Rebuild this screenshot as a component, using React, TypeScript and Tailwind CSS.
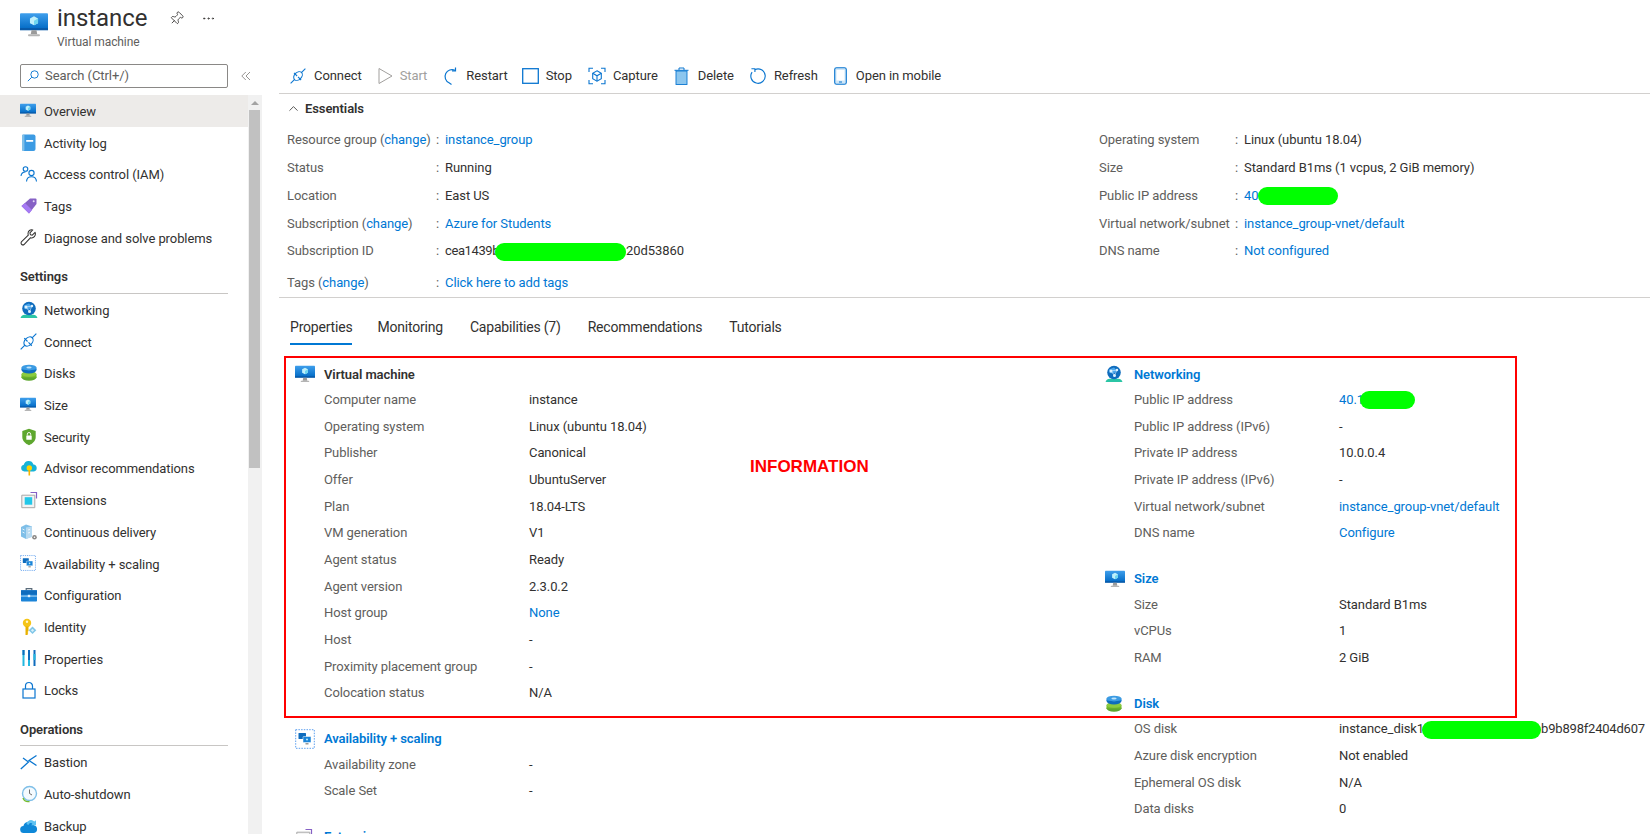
import { ChevronUp, Ellipsis, Pin } from "lucide-react";
import type { ReactNode } from "react";

function VmIcon({ className = "h-[16px] w-[18px]" }: { className?: string }) {
  return (
    <svg viewBox="0 0 18 16" className={className}>
      <defs>
        <linearGradient id="vmBlue" x1="0" y1="0" x2="0" y2="1">
          <stop offset="0" stopColor="#3f9fec" />
          <stop offset="1" stopColor="#0069c4" />
        </linearGradient>
      </defs>
      <rect x="0" y="0.5" width="18" height="10.5" rx="0.6" fill="url(#vmBlue)" />
      <rect x="0" y="10" width="18" height="1.4" fill="#0a5aa8" />
      <path d="M7.4 11.4h3.2l.5 2.6H6.9z" fill="#9a9a9a" />
      <rect x="5.2" y="14" width="7.6" height="1.2" rx="0.5" fill="#b5b5b5" />
      <path d="M9 2.4l2.6 1.4v3L9 8.2 6.4 6.8v-3z" fill="#bff0fb" />
      <path d="M9 5.2l2.6-1.4v3L9 8.2z" fill="#6fd6ef" />
    </svg>
  );
}

function LogIcon() {
  return (
    <svg viewBox="0 0 18 18" className="h-[18px] w-[18px]">
      <rect x="2" y="0.5" width="13.5" height="16.5" rx="2" fill="#3c9be3" />
      <rect x="2" y="0.5" width="2.4" height="16.5" rx="1" fill="#7fbfe8" />
      <rect x="6.2" y="6" width="7" height="1.8" fill="#fff" />
    </svg>
  );
}

function IamIcon() {
  return (
    <svg viewBox="0 0 18 18" className="h-[18px] w-[18px]" fill="none" stroke="#0b76d0" strokeWidth="1.1">
      <circle cx="5.5" cy="4" r="2.3" />
      <path d="M1 11c.3-2.6 2-4 4.5-4" />
      <circle cx="11.5" cy="8" r="2.6" />
      <path d="M6.5 16.5c.2-3.2 2.2-4.8 5-4.8s4.8 1.6 5 4.8" />
    </svg>
  );
}

function TagIcon() {
  return (
    <svg viewBox="0 0 18 18" className="h-[18px] w-[18px]">
      <path d="M1.5 9 10 1.5h5.5a1 1 0 0 1 1 1V7L9 16.5z" fill="#8661c5" />
      <path d="M1.5 9 9 16.5l3-3.4L5 6z" fill="#a67af4" />
      <circle cx="13.7" cy="4.3" r="1" fill="#e4d8f8" />
    </svg>
  );
}

function WrenchIcon() {
  return (
    <svg viewBox="0 0 18 18" className="h-[17px] w-[17px]" fill="none" stroke="#323130" strokeWidth="1.1" strokeLinejoin="round">
      <path d="M16 3.5l-3 3-2-.5-.5-2 3-3c-2.5-.8-5.2 1-5 4 0 .6.1 1 .3 1.5L1.7 13.4a1.8 1.8 0 0 0 2.8 2.8l6.7-7c3 1 6-2 4.800-5.700z" />
    </svg>
  );
}

function GlobeIcon() {
  return (
    <svg viewBox="0 0 18 18" className="h-[18px] w-[18px]">
      <path d="M0.5 17c.7-2.200 2.500-3.200 4-3.200h9c1.500 0 3.300 1 4 3.200z" fill="#2bc5a5" />
      <circle cx="9" cy="7.5" r="6.800" fill="#0f6cbd" />
      <path d="M4 4.500l5-2 3 3-3 3-4.500-.5z" fill="#4aa6ec" />
      <circle cx="6" cy="6" r="1.500" fill="#dff2fd" />
      <circle cx="12" cy="5" r="1.200" fill="#dff2fd" />
      <circle cx="9.5" cy="10.500" r="1.500" fill="#dff2fd" />
      <path d="M6 6l6-1-2.500 5.500z" fill="none" stroke="#dff2fd" strokeWidth="0.6" />
    </svg>
  );
}

function PlugIcon({ className = "h-[17px] w-[17px]" }: { className?: string }) {
  return (
    <svg viewBox="0 0 18 18" className={className} fill="none" stroke="#0b76d0" strokeWidth="1.2">
      <path d="M0.7 17.300 5.200 12.800" />
      <path d="M17.300 0.700 12.800 5.200" />
      <ellipse cx="9" cy="9" rx="5.600" ry="4" transform="rotate(-45 9 9)" />
      <path d="M4.500 5.500 8 9M9 10 12.500 13.500" />
    </svg>
  );
}

function DiskIcon({ className = "h-[18px] w-[18px]" }: { className?: string }) {
  return (
    <svg viewBox="0 0 18 18" className={className}>
      <ellipse cx="9" cy="13.300" rx="7.500" ry="3.500" fill="#5ea72e" />
      <rect x="1.5" y="10" width="15" height="3.400" fill="#76bc2d" />
      <ellipse cx="9" cy="10" rx="7.500" ry="2.800" fill="#8ccb40" />
      <ellipse cx="9" cy="6" rx="7.500" ry="3.500" fill="#0f6cbd" />
      <rect x="1.5" y="3.600" width="15" height="2.400" fill="#1b84d8" />
      <ellipse cx="9" cy="3.600" rx="7.500" ry="2.800" fill="#3c9be3" />
      <ellipse cx="9" cy="3.600" rx="2.600" ry="1" fill="#bfe3fa" />
    </svg>
  );
}

function ShieldIcon() {
  return (
    <svg viewBox="0 0 18 18" className="h-[18px] w-[18px]">
      <path d="M9 0.8 15.700 3v6c0 4-3.300 6.800-6.700 8.200C5.600 15.800 2.300 13 2.300 9V3z" fill="#5ea72e" />
      <rect x="6.3" y="7.500" width="5.400" height="4.300" rx="0.5" fill="#fff" />
      <path d="M7.300 7.500V6.200a1.700 1.700 0 0 1 3.400 0v1.300" fill="none" stroke="#fff" strokeWidth="0.9" />
    </svg>
  );
}

function AdvisorIcon() {
  return (
    <svg viewBox="0 0 18 18" className="h-[18px] w-[18px]">
      <path d="M4.300 12.500a3.400 3.400 0 0 1-.5-6.700 5 5 0 0 1 9.600-.4 3.600 3.600 0 0 1 .5 7.100z" fill="#17b3d8" />
      <circle cx="9.3" cy="9" r="2.700" fill="#ffd400" />
      <rect x="8.5" y="11" width="1.600" height="5.500" fill="#f7b500" />
    </svg>
  );
}

function ExtensionIcon() {
  return (
    <svg viewBox="0 0 18 18" className="h-[18px] w-[18px]">
      <path d="M14.800 4.200H1.800v12.500h13z" fill="#f3f3f3" stroke="#a8a8a8" strokeWidth="1" />
      <rect x="4.7" y="6.200" width="7.500" height="7.500" fill="#22c7e8" />
      <path d="M10.500 1.500h6v6" fill="none" stroke="#8661c5" strokeWidth="1.2" />
    </svg>
  );
}

function DeliveryIcon() {
  return (
    <svg viewBox="0 0 18 18" className="h-[18px] w-[18px]">
      <path d="M1 4l5-2.500 6 2v10L6 16l-5-2.500z" fill="#7fbfe8" />
      <path d="M6 4.500l6-1v10.500L6 16z" fill="#b7daf1" />
      <path d="M2.500 6l2 1M2.500 9l2 1M8 7l2-.5M8 10l2-.5" stroke="#fff" strokeWidth="0.8" />
      <circle cx="14.5" cy="14.300" r="2.300" fill="#8a8886" />
      <circle cx="14.5" cy="14.300" r="0.8" fill="#fff" />
    </svg>
  );
}

function ScalingIcon({ className = "h-[18px] w-[18px]" }: { className?: string }) {
  return (
    <svg viewBox="0 0 20 20" className={className}>
      <rect x="0.7" y="0.700" width="18.600" height="18.600" fill="#fff" stroke="#5ea0ef" strokeWidth="1" strokeDasharray="1.500 1.200" />
      <rect x="3.5" y="4" width="7.500" height="6" rx="0.5" fill="#0f6cbd" />
      <rect x="8" y="7.500" width="8" height="6" rx="0.5" fill="#1b84d8" stroke="#fff" strokeWidth="0.5" />
      <rect x="10.5" y="14" width="3" height="1.500" fill="#9a9a9a" />
      <circle cx="12" cy="10.500" r="1" fill="#bff0fb" />
    </svg>
  );
}

function ToolboxIcon() {
  return (
    <svg viewBox="0 0 18 18" className="h-[18px] w-[18px]">
      <path d="M6.200 4.500V2.700h5.600v1.800" fill="none" stroke="#5a6b7a" strokeWidth="1.2" />
      <rect x="1" y="4.300" width="16" height="11.200" rx="0.8" fill="#1b84d8" />
      <rect x="1" y="4.300" width="16" height="4.300" fill="#0f6cbd" />
      <rect x="1" y="9.600" width="16" height="0.900" fill="#cde8fa" />
      <rect x="7.8" y="8.800" width="2.400" height="2.400" fill="#e5f3fc" />
    </svg>
  );
}

function KeyIcon() {
  return (
    <svg viewBox="0 0 18 18" className="h-[18px] w-[18px]">
      <circle cx="7" cy="5" r="4.200" fill="#f5c518" />
      <circle cx="7" cy="3.700" r="1.200" fill="#fff6cc" />
      <path d="M5.500 8.500h3V13l-1 1 .8 1-.8 1 .3 1H5.500z" fill="#e8b100" />
      <path d="M12.500 8.500l3.800 3.800-3.800 3.800-3.800-3.800z" fill="#7fc6e8" />
      <path d="M12.500 10.700l1.600 1.600-1.600 1.600-1.600-1.600z" fill="#d6effa" />
    </svg>
  );
}

function PropsIcon() {
  return (
    <svg viewBox="0 0 18 18" className="h-[18px] w-[18px]">
      <rect x="2.5" y="1" width="2" height="16" fill="#22b8e0" />
      <rect x="2.5" y="1" width="2" height="5" fill="#0f6cbd" />
      <rect x="8" y="1" width="2" height="16" fill="#22b8e0" />
      <rect x="8" y="1" width="2" height="10" fill="#0f6cbd" />
      <rect x="13.5" y="1" width="2" height="16" fill="#0f6cbd" />
      <rect x="13.5" y="5" width="2" height="6" fill="#22b8e0" />
    </svg>
  );
}

function LockIcon() {
  return (
    <svg viewBox="0 0 18 18" className="h-[18px] w-[18px]" fill="none" stroke="#0b76d0" strokeWidth="1.2">
      <rect x="3" y="8" width="12" height="9" />
      <path d="M5.500 8V5a3.500 3.500 0 0 1 7 0v3" />
    </svg>
  );
}

function BastionIcon() {
  return (
    <svg viewBox="0 0 18 18" className="h-[18px] w-[18px]" fill="none" stroke="#0b76d0" strokeWidth="1.3">
      <path d="M0.8 16 8.500 9 3 5" />
      <path d="M16.500 2.500 9 7.500l7.500 5" />
    </svg>
  );
}

function ClockIcon() {
  return (
    <svg viewBox="0 0 18 18" className="h-[18px] w-[18px]" fill="none">
      <circle cx="9.5" cy="8.500" r="7" stroke="#7fbfe8" strokeWidth="1.4" fill="#f4fafe" />
      <path d="M3 13c1 2.600 3.800 4 6.500 3.500" stroke="#76bc2d" strokeWidth="1.4" />
      <path d="M9.500 4.500v4l2.500 1.500" stroke="#605e5c" strokeWidth="0.9" />
    </svg>
  );
}

function BackupIcon() {
  return (
    <svg viewBox="0 0 18 18" className="h-[18px] w-[18px]">
      <path d="M4 16a3.500 3.500 0 0 1-.6-7 5.500 5.500 0 0 1 10.500-.8A4 4 0 0 1 14 16z" fill="#0f88d8" />
      <path d="M6.500 7a4.500 4.500 0 0 1 7.800-2.500l1.700-1.300v5h-5l1.700-1.500A2.500 2.500 0 0 0 8.500 8z" fill="#5ec2f2" />
    </svg>
  );
}

function StartIcon() {
  return (
    <svg viewBox="0 0 15 18" className="h-[18px] w-[15px]" fill="none" stroke="#a19f9d" strokeWidth="1">
      <path d="M1 1.500 14 9 1 16.500z" />
    </svg>
  );
}

function RestartIcon() {
  return (
    <svg viewBox="0 0 16 18" className="h-[18px] w-[16px]" fill="none" stroke="#0b76d0" strokeWidth="1.2">
      <path d="M12 3.300A6.600 6.600 0 0 0 6 15.800L8.500 17.500" />
      <path d="M12.500 0.500v3.300H9" />
    </svg>
  );
}

function StopIcon() {
  return (
    <svg viewBox="0 0 17 16" className="h-[16px] w-[17px]" fill="none" stroke="#0b76d0" strokeWidth="1.3">
      <rect x="0.7" y="0.700" width="15.600" height="14.600" />
    </svg>
  );
}

function DeleteIcon() {
  return (
    <svg viewBox="0 0 15 18" className="h-[18px] w-[15px]">
      <rect x="2" y="4" width="11" height="13.500" fill="#8cc6ee" stroke="#0b76d0" strokeWidth="0.9" />
      <path d="M0.500 3.300h14M5 3V1h5v2" fill="none" stroke="#0b76d0" strokeWidth="1" />
    </svg>
  );
}

function RefreshIcon() {
  return (
    <svg viewBox="0 0 18 18" className="h-[17px] w-[17px]" fill="none" stroke="#0b76d0" strokeWidth="1.2">
      <path d="M5.200 2.800A7.600 7.600 0 1 1 2.200 5.400" />
      <path d="M1.500 1.800h3.700v3.600" />
    </svg>
  );
}

function CaptureIcon() {
  return (
    <svg viewBox="0 0 18 18" className="h-[18px] w-[18px]" fill="none" stroke="#0b76d0" strokeWidth="1.1">
      <path d="M1 5V1.200h4M13 1.200h4V5M17 13v3.800h-4M5 16.800H1V13" />
      <path d="M9 3.800l4.300 2.400v5.600L9 14.200l-4.300-2.400V6.200z" />
      <path d="M4.700 6.200 9 8.800l4.300-2.600M9 8.800v5.400" />
    </svg>
  );
}

function MobileIcon() {
  return (
    <svg viewBox="0 0 13 18" className="h-[18px] w-[13px]">
      <rect x="0.700" y="0.700" width="11.600" height="16.600" rx="1.800" fill="#cfe6f7" stroke="#0b76d0" strokeWidth="1.1" />
      <rect x="2.500" y="3" width="8" height="10.500" fill="#fff" />
      <rect x="5" y="14.500" width="3" height="1" fill="#0b76d0" />
    </svg>
  );
}

function SearchGlass() {
  return (
    <svg viewBox="0 0 14 14" className="h-[12px] w-[12px]" fill="none" stroke="#0b76d0" strokeWidth="1.1">
      <circle cx="8.800" cy="5.200" r="4.300" />
      <path d="M5.600 8.400 1 13" />
    </svg>
  );
}

function DoubleLeft() {
  return (
    <svg viewBox="0 0 10 10" className="h-[10px] w-[10px]" fill="none" stroke="#8a8886" strokeWidth="0.9">
      <path d="M4.800 1 .8 5l4 4M9 1 5 5l4 4" />
    </svg>
  );
}

const topNav: [ReactNode, string][] = [
  [<VmIcon key="vm" className="h-[15px] w-[16px]" />, "Overview"],
  [<LogIcon key="log" />, "Activity log"],
  [<IamIcon key="iam" />, "Access control (IAM)"],
  [<TagIcon key="tag" />, "Tags"],
  [<WrenchIcon key="wrench" />, "Diagnose and solve problems"],
];

const settingsNav: [ReactNode, string][] = [
  [<GlobeIcon key="globe" />, "Networking"],
  [<PlugIcon key="plug" />, "Connect"],
  [<DiskIcon key="disk" />, "Disks"],
  [<VmIcon key="size" className="h-[15px] w-[16px]" />, "Size"],
  [<ShieldIcon key="shield" />, "Security"],
  [<AdvisorIcon key="advisor" />, "Advisor recommendations"],
  [<ExtensionIcon key="ext" />, "Extensions"],
  [<DeliveryIcon key="cd" />, "Continuous delivery"],
  [<ScalingIcon key="scale" className="h-[16px] w-[16px]" />, "Availability + scaling"],
  [<ToolboxIcon key="box" />, "Configuration"],
  [<KeyIcon key="key" />, "Identity"],
  [<PropsIcon key="props" />, "Properties"],
  [<LockIcon key="lock" />, "Locks"],
];

const operationsNav: [ReactNode, string][] = [
  [<BastionIcon key="bastion" />, "Bastion"],
  [<ClockIcon key="clock" />, "Auto-shutdown"],
  [<BackupIcon key="backup" />, "Backup"],
];

function NavRow({ icon, label, active }: { icon: ReactNode; label: string; active?: boolean }) {
  return (
    <div className={`flex h-[31.7px] shrink-0 items-center pl-[20px] ${active ? "bg-[#edebe9]" : ""}`}>
      <span className="flex w-[24px] items-center">{icon}</span>
      <span className="pt-[2px] text-[#323130]">{label}</span>
    </div>
  );
}

function NavHeading({ label }: { label: string }) {
  return (
    <div className="flex h-[40.5px] shrink-0 flex-col justify-end px-[20px]">
      <div className="border-b border-[#c8c6c4] pb-[6px] font-semibold text-[#323130]">{label}</div>
    </div>
  );
}

function Sidebar() {
  return (
    <aside className="flex w-[262px] shrink-0 flex-col">
      <div className="flex h-[37px] shrink-0 items-start">
        <div className="ml-[20px] mt-[6px] flex h-[24px] w-[208px] items-center gap-[6px] rounded-[2px] border border-[#8a8886] pl-[6px] text-[#605e5c]">
          <SearchGlass />
          <span>Search (Ctrl+/)</span>
        </div>
        <div className="ml-[13px] mt-[13px]">
          <DoubleLeft />
        </div>
      </div>
      <div className="flex min-h-0 flex-1">
        <nav className="flex w-[248px] shrink-0 flex-col overflow-hidden">
          {topNav.map(([icon, label], i) => (
            <NavRow key={label} icon={icon} label={label} active={i === 0} />
          ))}
          <NavHeading label="Settings" />
          {settingsNav.map(([icon, label]) => (
            <NavRow key={label} icon={icon} label={label} />
          ))}
          <NavHeading label="Operations" />
          {operationsNav.map(([icon, label]) => (
            <NavRow key={label} icon={icon} label={label} />
          ))}
        </nav>
        <div className="flex w-[14px] shrink-0 flex-col items-start bg-[#f1f1f1]">
          <div className="flex h-[15px] w-[13px] items-center justify-center">
            <div className="h-0 w-0 border-x-[4px] border-b-[4px] border-x-transparent border-b-[#a3a3a3]" />
          </div>
          <div className="ml-[1px] h-[358px] w-[11px] bg-[#c1c1c1]" />
        </div>
      </div>
    </aside>
  );
}

const actions: { icon: ReactNode; label: string; cell: string; off?: boolean; tight?: boolean }[] = [
  { icon: <PlugIcon className="h-[16px] w-[16px]" />, label: "Connect", cell: "w-[24px]" },
  { icon: <StartIcon />, label: "Start", cell: "w-[22px]", off: true },
  { icon: <RestartIcon />, label: "Restart", cell: "w-[23px]", tight: true },
  { icon: <StopIcon />, label: "Stop", cell: "w-[24px]" },
  { icon: <CaptureIcon />, label: "Capture", cell: "w-[25px]" },
  { icon: <DeleteIcon />, label: "Delete", cell: "w-[24px]" },
  { icon: <RefreshIcon />, label: "Refresh", cell: "w-[24px]" },
  { icon: <MobileIcon />, label: "Open in mobile", cell: "w-[22px]" },
];

function Toolbar() {
  return (
    <div className="ml-[17px] flex h-[36px] items-center gap-[16px] border-b border-[#d2d0ce] pl-[11px]">
      {actions.map((a) => (
        <div key={a.label} className={`flex items-center ${a.tight ? "-mr-[2px]" : ""}`}>
          <span className={`flex items-center ${a.cell}`}>{a.icon}</span>
          <span className={a.off ? "text-[#a19f9d]" : "text-[#323130]"}>{a.label}</span>
        </div>
      ))}
    </div>
  );
}

// green marker that hides part of an id or address
function Blob({ className }: { className: string }) {
  return <span className={`inline-block h-[18px] rounded-full bg-[#00ff00] align-middle ${className}`} />;
}

function A({ children }: { children: ReactNode }) {
  return <span className="text-[#0078d4]">{children}</span>;
}

function EssentialRow({ label, value, wide }: { label: ReactNode; value: ReactNode; wide?: boolean }) {
  return (
    <div className="flex h-[27.8px] items-center text-[#323130]">
      <span className={`shrink-0 text-[#605e5c] ${wide ? "w-[149px]" : "w-[136px]"}`}>{label}</span>
      <span className="w-[9px] shrink-0 text-[#605e5c]">:</span>
      <span className="whitespace-nowrap">{value}</span>
    </div>
  );
}

function Essentials() {
  return (
    <div className="ml-[17px] border-b border-[#d2d0ce] pl-[7px]">
      <div className="flex h-[28px] items-center gap-[4px] pt-[1px] font-semibold text-[#323130]">
        <ChevronUp className="h-[15px] w-[15px]" strokeWidth={1.3} />
        <span>Essentials</span>
      </div>
      <div className="ml-[1px] mt-[4px] grid grid-cols-[812px_1fr]">
        <div>
          <EssentialRow wide label={<>Resource group (<A>change</A>)</>} value={<A>instance_group</A>} />
          <EssentialRow wide label="Status" value="Running" />
          <EssentialRow wide label="Location" value="East US" />
          <EssentialRow wide label={<>Subscription (<A>change</A>)</>} value={<A>Azure for Students</A>} />
          <EssentialRow
            wide
            label="Subscription ID"
            value={<><span className="tracking-[-0.4px]">cea1439b</span><Blob className="-ml-[4px] w-[131px]" />20d53860</>}
          />
          <div className="pt-[4px]">
            <EssentialRow wide label={<>Tags (<A>change</A>)</>} value={<A>Click here to add tags</A>} />
          </div>
        </div>
        <div>
          <EssentialRow label="Operating system" value="Linux (ubuntu 18.04)" />
          <EssentialRow label="Size" value="Standard B1ms (1 vcpus, 2 GiB memory)" />
          <EssentialRow label="Public IP address" value={<A>40<Blob className="w-[80px]" /></A>} />
          <EssentialRow label="Virtual network/subnet" value={<A>instance_group-vnet/default</A>} />
          <EssentialRow label="DNS name" value={<A>Not configured</A>} />
        </div>
      </div>
    </div>
  );
}

function Tabs() {
  const tabs = ["Properties", "Monitoring", "Capabilities (7)", "Recommendations", "Tutorials"];
  return (
    <div className="ml-[28px] flex h-[47px] items-end gap-[27px] text-[14px] tracking-[-0.2px] text-[#323130]">
      {tabs.map((t, i) => (
        <div key={t} className={`h-[32px] pt-[4px] ${i === 0 ? "-mr-[2px] border-b-2 border-[#0078d4]" : ""}`}>
          {t}
        </div>
      ))}
    </div>
  );
}

type Row = [string, ReactNode];

function Section({ icon, title, link, rows }: { icon: ReactNode; title: string; link?: boolean; rows: Row[] }) {
  return (
    <section className="mb-[20.6px]">
      <div className="flex h-[24px] items-center">
        <span className="flex w-[29px] items-center">{icon}</span>
        <span className={`font-semibold ${link ? "text-[#0078d4]" : "text-[#323130]"}`}>{title}</span>
      </div>
      {rows.map(([label, value]) => (
        <div key={label} className="flex h-[26.7px] items-center pl-[29px]">
          <span className="w-[205px] shrink-0 text-[#605e5c]">{label}</span>
          <span className="whitespace-nowrap text-[#323130]">{value}</span>
        </div>
      ))}
    </section>
  );
}

function Properties() {
  return (
    <div className="relative">
      {/* red annotation on top of the screenshot */}
      <div className="absolute left-[22px] top-[11px] h-[362px] w-[1233px] border-2 border-[#ff0000]" />
      <div className="absolute left-[488px] top-[109px] font-['Liberation_Sans',sans-serif] text-[17px] font-bold tracking-normal text-[#ff0000]">
        INFORMATION
      </div>
      <div className="ml-[33px] grid grid-cols-[810px_1fr] pt-[17.5px]">
        <div>
          <Section
            icon={<VmIcon className="h-[18px] w-[20px]" />}
            title="Virtual machine"
            rows={[
              ["Computer name", "instance"],
              ["Operating system", "Linux (ubuntu 18.04)"],
              ["Publisher", "Canonical"],
              ["Offer", "UbuntuServer"],
              ["Plan", "18.04-LTS"],
              ["VM generation", "V1"],
              ["Agent status", "Ready"],
              ["Agent version", "2.3.0.2"],
              ["Host group", <A key="none">None</A>],
              ["Host", "-"],
              ["Proximity placement group", "-"],
              ["Colocation status", "N/A"],
            ]}
          />
          <Section
            icon={<ScalingIcon className="h-[20px] w-[20px]" />}
            title="Availability + scaling"
            link
            rows={[
              ["Availability zone", "-"],
              ["Scale Set", "-"],
            ]}
          />
          <Section icon={<ExtensionIcon />} title="Extensions" link rows={[]} />
        </div>
        <div>
          <Section
            icon={<GlobeIcon />}
            title="Networking"
            link
            rows={[
              ["Public IP address", <A key="ip">40.1<Blob className="-ml-[4px] w-[55px]" /></A>],
              ["Public IP address (IPv6)", "-"],
              ["Private IP address", "10.0.0.4"],
              ["Private IP address (IPv6)", "-"],
              ["Virtual network/subnet", <A key="vnet">instance_group-vnet/default</A>],
              ["DNS name", <A key="dns">Configure</A>],
            ]}
          />
          <Section
            icon={<VmIcon className="h-[18px] w-[20px]" />}
            title="Size"
            link
            rows={[
              ["Size", "Standard B1ms"],
              ["vCPUs", "1"],
              ["RAM", "2 GiB"],
            ]}
          />
          <Section
            icon={<DiskIcon />}
            title="Disk"
            link
            rows={[
              ["OS disk", <span key="os">instance_disk1<Blob className="-ml-[2px] w-[119px]" /><span className="tracking-[-0.2px]">b9b898f2404d607</span></span>],
              ["Azure disk encryption", "Not enabled"],
              ["Ephemeral OS disk", "N/A"],
              ["Data disks", "0"],
            ]}
          />
        </div>
      </div>
    </div>
  );
}

export default function App() {
  return (
    <div className="flex h-[834px] w-[1650px] flex-col overflow-hidden bg-white font-['Roboto',sans-serif] text-[13px] tracking-[-0.08px]">
      <header className="flex h-[58px] shrink-0 pl-[20px]">
        <VmIcon className="mt-[12px] h-[26px] w-[28px]" />
        <div className="ml-[9px]">
          <div className="flex items-center">
            <span className="text-[24px] leading-[36px] text-[#323130]">instance</span>
            <Pin className="ml-[22px] h-[15px] w-[15px] rotate-45" strokeWidth={1.3} color="#323130" />
            <Ellipsis className="ml-[17px] h-[15px] w-[15px]" strokeWidth={1.3} color="#323130" />
          </div>
          <div className="text-[12px] leading-[12px] text-[#605e5c]">Virtual machine</div>
        </div>
      </header>
      <div className="flex min-h-0 flex-1">
        <Sidebar />
        <main className="min-w-0 flex-1">
          <Toolbar />
          <Essentials />
          <Tabs />
          <Properties />
        </main>
      </div>
    </div>
  );
}
